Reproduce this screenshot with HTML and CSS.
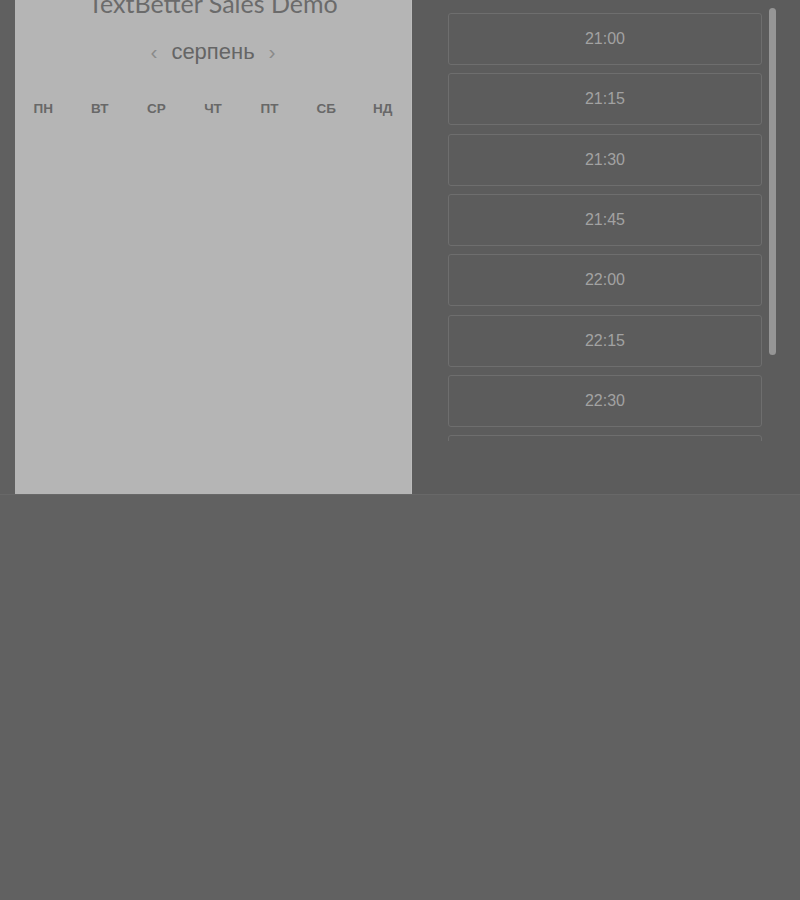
FILE: index.html
```html
<!DOCTYPE html>
<html lang="uk">
<head>
<meta charset="utf-8">
<title>TextBetter Sales Demo</title>
<link rel="stylesheet" href="styles.css">
</head>
<body>
<div class="page">
  <div class="gutter"></div>
  <section class="panel">
    <h1 class="title">TextBetter Sales Demo</h1>
    <div class="month">
      <span class="arrow">‹</span>
      <span class="month-name">серпень</span>
      <span class="arrow">›</span>
    </div>
    <div class="weekdays">
      <span>ПН</span><span>ВТ</span><span>СР</span><span>ЧТ</span><span>ПТ</span><span>СБ</span><span>НД</span>
    </div>
  </section>
  <section class="times">
    <div class="slot-list">
      <div class="slot">21:00</div>
      <div class="slot">21:15</div>
      <div class="slot">21:30</div>
      <div class="slot">21:45</div>
      <div class="slot">22:00</div>
      <div class="slot">22:15</div>
      <div class="slot">22:30</div>
      <div class="slot">22:45</div>
    </div>
    <div class="scrollbar"></div>
  </section>
</div>
<div class="below"></div>
</body>
</html>
```
FILE: styles.css
```css
html, body {
  margin: 0;
  padding: 0;
  background: #616161;
  font-family: "Liberation Sans", Arial, sans-serif;
}
.page {
  display: flex;
  height: 494px;
}
.gutter {
  width: 15px;
  background: #606060;
}
.panel {
  width: 396px;
  background: #b5b5b5;
  border-right: 1px solid #bcbcbc;
  overflow: hidden;
}
.title {
  margin: -10px 0 0;
  text-align: center;
  font-family: Lato, "Liberation Sans", sans-serif;
  font-weight: 400;
  font-size: 25px;
  line-height: 26px;
  color: #6b6b6b;
}
.month {
  display: flex;
  justify-content: center;
  align-items: center;
  gap: 14px;
  margin-top: 24px;
  height: 24px;
}
.month-name {
  font-size: 22px;
  color: #656565;
  line-height: 24px;
}
.arrow {
  font-size: 21px;
  color: #8a8a8a;
  line-height: 24px;
}
.weekdays {
  display: grid;
  grid-template-columns: repeat(7, 1fr);
  margin-top: 37px;
  text-align: center;
  font-weight: 700;
  font-size: 13.5px;
  color: #686868;
  line-height: 16px;
}
.times {
  flex: 1;
  background: #5c5c5c;
  position: relative;
  padding: 13px 0 0 36px;
}
.slot-list {
  width: 314px;
  height: 428px;
  overflow: hidden;
  display: flex;
  flex-direction: column;
  gap: 8.33px;
}
.slot {
  flex: none;
  height: 50px;
  border: 1px solid #6e6e6e;
  border-radius: 3px;
  display: flex;
  align-items: center;
  justify-content: center;
  font-size: 16px;
  color: #a2a2a2;
}
.scrollbar {
  position: absolute;
  left: 357px;
  top: 8px;
  width: 7px;
  height: 347px;
  border-radius: 4px;
  background: #969696;
}
.below {
  height: 406px;
  border-top: 1px solid #686868;
  box-sizing: border-box;
  background: #616161;
}
```
